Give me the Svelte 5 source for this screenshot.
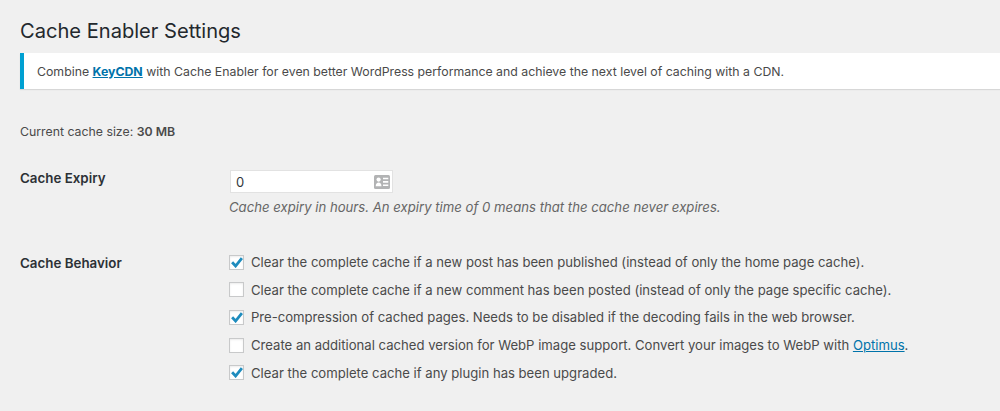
<script lang="ts">
  const options = [
    { checked: true, text: 'Clear the complete cache if a new post has been published (instead of only the home page cache).' },
    { checked: false, text: 'Clear the complete cache if a new comment has been posted (instead of only the page specific cache).' },
    { checked: true, text: 'Pre-compression of cached pages. Needs to be disabled if the decoding fails in the web browser.' },
    { checked: false, text: 'Create an additional cached version for WebP image support. Convert your images to WebP with ', link: 'Optimus' },
    { checked: true, text: 'Clear the complete cache if any plugin has been upgraded.' },
  ]
</script>

<div class="wrap">
  <h1>Cache Enabler Settings</h1>

  <div class="notice">
    <p>Combine <a class="strong" href="#keycdn">KeyCDN</a> with Cache Enabler for even better WordPress performance and achieve the next level of caching with a CDN.</p>
  </div>

  <p class="size">Current cache size: <b>30 MB</b></p>

  <div class="row expiry">
    <div class="label">Cache Expiry</div>
    <div>
      <div class="input">
        <span>0</span>
        <svg width="16" height="14" viewBox="0 0 16 14" aria-hidden="true">
          <rect width="16" height="14" rx="1.5" fill="#b2b3b4" />
          <circle cx="4.6" cy="4.6" r="2.1" fill="#fff" />
          <path d="M1.7 11.3c0-2.8 1.3-3.9 2.9-3.9s2.9 1.1 2.9 3.9z" fill="#fff" />
          <path d="M9 2.7h5.3v1.6H9zM9 6.1h5.3v1.6H9zM9 9.5h5.3v1.6H9z" fill="#fff" />
        </svg>
      </div>
      <p class="hint">Cache expiry in hours. An expiry time of 0 means that the cache never expires.</p>
    </div>
  </div>

  <div class="row behavior">
    <div class="label">Cache Behavior</div>
    <ul>
      {#each options as option}
        <li>
          <span class="box">
            {#if option.checked}
              <svg width="12" height="11" viewBox="0 0 12 11" aria-hidden="true">
                <path d="M1.1 5.3 4.6 9 10.9 1.1" fill="none" stroke="#1e8cbe" stroke-width="2.8" />
              </svg>
            {/if}
          </span>
          <span>{option.text}{#if option.link}<a href="#optimus">{option.link}</a>.{/if}</span>
        </li>
      {/each}
    </ul>
  </div>
</div>

<style>
  :global(body) {
    margin: 0;
    background: #f0f0f0;
  }

  .wrap {
    height: 411px;
    overflow: hidden;
    box-sizing: border-box;
    padding: 19px 0 0 20px;
    font-family: Inter, "Liberation Sans", sans-serif;
    font-size: 13.12px;
    line-height: 18px;
    color: #4a4a4a;
  }

  h1 {
    margin: 0;
    font-size: 20.1px;
    font-weight: 400;
    line-height: 24px;
    color: #23282d;
  }

  .notice {
    margin-top: 10px;
    height: 36px;
    display: flex;
    align-items: center;
    box-sizing: border-box;
    padding: 1px 0 0 13px;
    background: #fff;
    border-left: 4px solid #00a0d2;
    box-shadow: 0 1px 1px rgba(0, 0, 0, 0.1);
    font-size: 12.31px;
  }

  p {
    margin: 0;
  }

  a {
    color: #0073aa;
    text-decoration: underline;
  }

  a.strong {
    font-weight: 700;
  }

  .size {
    margin-top: 34px;
    font-size: 12.3px;
  }

  b {
    font-weight: 600;
  }

  .row {
    display: grid;
    grid-template-columns: 210px 1fr;
  }

  .label {
    font-weight: 600;
    font-size: 13.35px;
    color: #2c3136;
  }

  .expiry {
    margin-top: 28px;
  }

  .input {
    width: 163px;
    height: 23px;
    margin-top: 1px;
    display: flex;
    align-items: center;
    justify-content: space-between;
    box-sizing: border-box;
    padding: 0 2px 0 5px;
    background: #fff;
    border: 1px solid #e2e2e2;
    color: #32373c;
    font-size: 13px;
  }

  .hint {
    margin-top: 5px;
    margin-left: -1px;
    font-size: 13.16px;
    font-style: italic;
    color: #666;
  }

  .behavior {
    margin-top: 38px;
  }

  ul {
    margin: -1px 0 0 -1px;
    padding: 0;
    list-style: none;
    display: flex;
    flex-direction: column;
    gap: 9.7px;
  }

  li {
    display: flex;
    align-items: center;
    gap: 7px;
    height: 18px;
  }

  .box {
    width: 13px;
    height: 13px;
    display: flex;
    align-items: center;
    justify-content: center;
    flex: none;
    background: #fff;
    border: 1px solid #c8c9ca;
    box-shadow: inset 0 1px 2px rgba(0, 0, 0, 0.08);
  }
</style>
